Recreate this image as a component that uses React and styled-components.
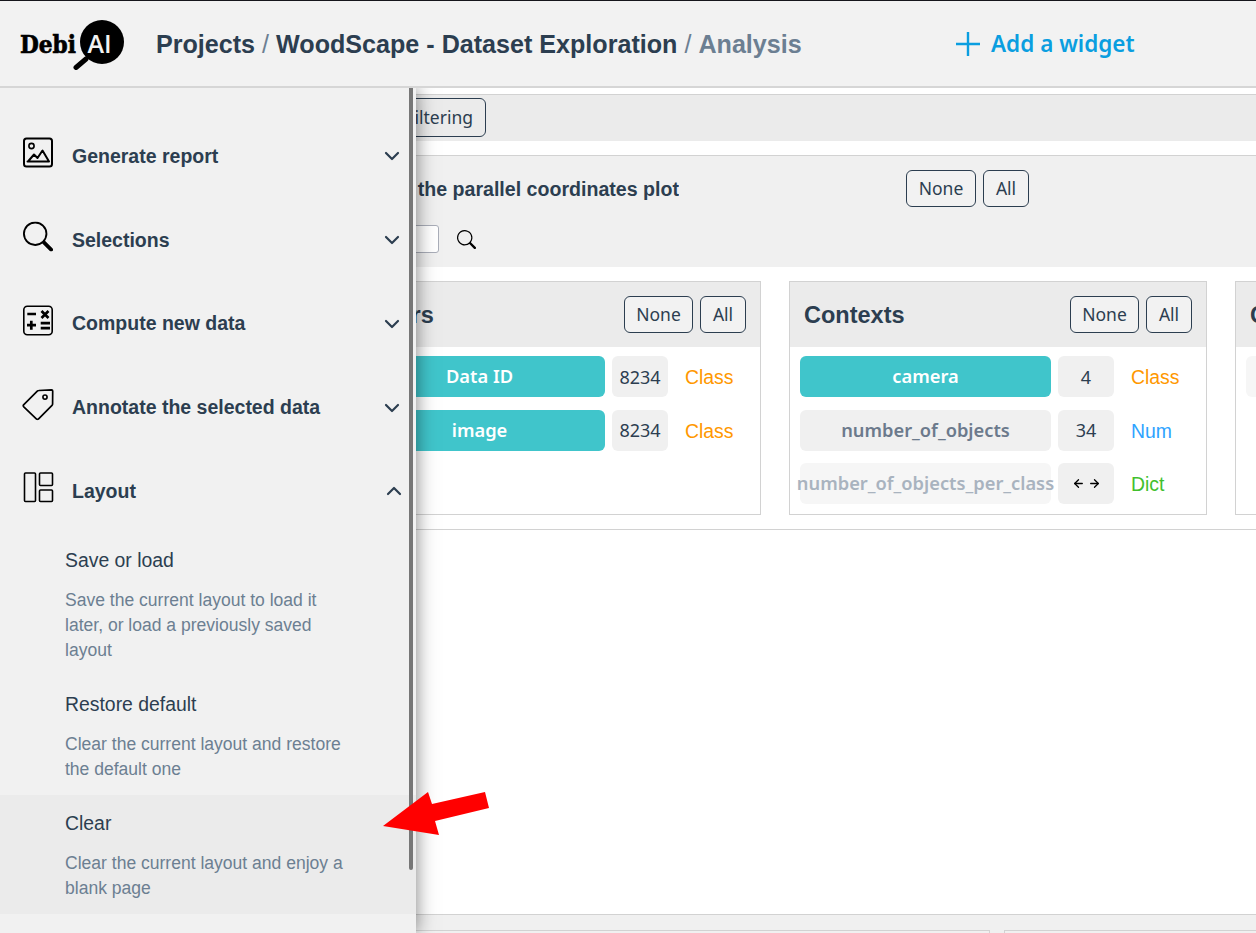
import React from "react";
import styled, { createGlobalStyle } from "styled-components";
import { ChevronDown, ChevronUp, ArrowLeft, ArrowRight } from "lucide-react";
import { BsSearch } from "react-icons/bs";

const GlobalStyle = createGlobalStyle`
  html, body {
    margin: 0;
    padding: 0;
    background: #fff;
    font-family: "Liberation Sans", Arial, sans-serif;
    color: #2c3e50;
  }
`;

const Page = styled.div`
  position: relative;
  width: 1256px;
  height: 933px;
  overflow: hidden;
  display: flex;
  flex-direction: column;
`;

const Header = styled.header`
  height: 85px;
  flex-shrink: 0;
  border-top: 1px solid #16161c;
  border-bottom: 2px solid #d6d6d6;
  background: #f2f2f2;
  display: flex;
  align-items: center;
`;

const Logo = styled.svg`
  width: 106px;
  height: 52px;
  margin-left: 20px;
  flex-shrink: 0;
`;

const Breadcrumb = styled.div`
  margin-left: 30px;
  padding-top: 2px;
  width: 800px;
  flex-shrink: 0;
  font-size: 25.12px;
  font-weight: 700;
  white-space: nowrap;
`;

const Slash = styled.span`
  font-weight: 400;
  color: #6c7f92;
  margin: 0 7px;
`;

const Current = styled.span`
  color: #6c7f92;
`;

const AddWidget = styled.div`
  display: flex;
  align-items: center;
  gap: 11px;
  font-family: "Noto Sans", sans-serif;
  font-size: 22.5px;
  font-weight: 600;
  color: #0a9ee0;
  white-space: nowrap;
`;

const TabBar = styled.div`
  margin-top: 6px;
  height: 47px;
  flex-shrink: 0;
  box-sizing: border-box;
  border-top: 1px solid #d2d2d2;
  background: #ebebeb;
  display: flex;
  align-items: flex-start;
  padding: 3px 0 0 380px;
`;

const Button = styled.button`
  box-sizing: border-box;
  height: 37px;
  padding: 0;
  width: ${(props) => props.$width}px;
  border: 1px solid #2c3e50;
  border-radius: 6px;
  background: #f2f2f2;
  color: #2c3e50;
  font-family: "Noto Sans", sans-serif;
  font-size: 17.5px;
  line-height: 1;
`;

const FilterTab = styled(Button)`
  height: 39px;
  background: #ebebeb;
  text-align: right;
  padding-right: 12px;
`;

const SelectBlock = styled.section`
  margin-top: 14px;
  height: 112px;
  flex-shrink: 0;
  box-sizing: border-box;
  border-top: 1px solid #d2d2d2;
  background: #f0f0f0;
  padding-top: 14px;
`;

const SelectHead = styled.div`
  display: flex;
  align-items: center;
  gap: 7px;
`;

const SelectTitle = styled.h2`
  width: 679px;
  margin: 0 220px 0 0;
  font-size: 19.6px;
  line-height: 37px;
  font-weight: 700;
  white-space: nowrap;
  overflow: hidden;
  display: flex;
  justify-content: flex-end;
  transform: translateY(1px);
`;

const SearchRow = styled.div`
  display: flex;
  align-items: center;
  gap: 18px;
  margin-top: 18px;
`;

const SearchInput = styled.input`
  box-sizing: border-box;
  width: 439px;
  height: 28px;
  flex-shrink: 0;
  border: 1px solid #a9adb8;
  border-radius: 3px;
  background: #fff;
`;

const Columns = styled.div`
  display: flex;
  gap: 28px;
  padding: 14px 0 14px 343px;
  flex-shrink: 0;
  border-bottom: 1px solid #d2d2d2;
`;

const Panel = styled.div`
  box-sizing: border-box;
  width: 418px;
  height: 234px;
  flex-shrink: 0;
  border: 1px solid #d2d2d2;
`;

const PanelHead = styled.div`
  height: 65px;
  background: #ebebeb;
  display: flex;
  align-items: center;
  justify-content: space-between;
  padding: 0 14px;
`;

const PanelTitle = styled.h3`
  margin: 2px 0 0;
  font-size: 23.5px;
  font-weight: 700;
`;

const ButtonGroup = styled.div`
  display: flex;
  gap: 7px;
`;

const Rows = styled.div`
  display: flex;
  flex-direction: column;
  gap: 12.5px;
  padding: 9px 10px;
`;

const Row = styled.div`
  display: flex;
  align-items: center;
  height: 41px;
`;

const Pill = styled.div`
  box-sizing: border-box;
  width: 251px;
  height: 41px;
  flex-shrink: 0;
  padding-bottom: 2px;
  border-radius: 6px;
  display: flex;
  align-items: center;
  justify-content: center;
  white-space: nowrap;
  font-family: "Noto Sans", sans-serif;
  font-size: 18.3px;
  font-weight: 600;
  background: ${(props) =>
    props.$state === "on" ? "#40c5cb" : props.$state === "off" ? "#f0f0f0" : "#f6f6f6"};
  color: ${(props) =>
    props.$state === "on" ? "#fff" : props.$state === "off" ? "#6c7a8c" : "#a9b3bf"};
`;

const Count = styled.div`
  width: 56px;
  height: 41px;
  flex-shrink: 0;
  margin-left: 7px;
  border-radius: 6px;
  background: #f0f0f0;
  display: flex;
  align-items: center;
  justify-content: center;
  gap: 3px;
  font-family: "Noto Sans", sans-serif;
  font-size: 18px;
  color: #2c3e50;
`;

const Type = styled.span`
  margin-left: 17px;
  padding-top: 2px;
  font-size: 19.4px;
  color: ${(props) => props.$color};
`;

const Blank = styled.div`
  flex: 1;
`;

const Footer = styled.div`
  height: 19px;
  flex-shrink: 0;
  box-sizing: border-box;
  border-top: 1px solid #d2d2d2;
  background: #f0f0f0;
  display: flex;
  gap: 14px;
  padding: 15px 0 0 343px;
`;

const FooterCard = styled.div`
  width: ${(props) => props.$width}px;
  flex-shrink: 0;
  box-sizing: border-box;
  border: 1px solid #d2d2d2;
  border-bottom: 0;
  background: #f0f0f0;
`;

const Sidebar = styled.aside`
  position: absolute;
  top: 88px;
  left: 0;
  bottom: 0;
  width: 416px;
  box-sizing: border-box;
  padding-top: 26.6px;
  background: #f1f1f1;
  box-shadow: 0 0 18px rgba(0, 0, 0, 0.5);
  clip-path: inset(0 -30px 0 0);
`;

const Scrollbar = styled.div`
  position: absolute;
  top: 0;
  left: 409px;
  width: 4px;
  height: 782px;
  background: #777;
  border-radius: 0 0 2px 2px;
`;

const MenuRow = styled.div`
  height: 83.7px;
  display: flex;
  align-items: center;
  padding: 0 12px 0 22px;
`;

const MenuIcon = styled.span`
  width: 32px;
  height: 32px;
  display: flex;
  align-items: center;
  justify-content: center;
  color: #000;
  flex-shrink: 0;
  transform: translateY(-3.5px);
`;

const MenuLabel = styled.span`
  margin-left: 18px;
  flex: 1;
  font-size: 19.5px;
  font-weight: 700;
`;

const UpChevron = styled(ChevronUp)`
  margin-right: -2px;
`;

const SubList = styled.div`
  margin-top: -1px;
`;

const SubItem = styled.div`
  padding: 16px 60px 13.5px 65px;
  background: ${(props) => (props.$active ? "#ebebeb" : "transparent")};
`;

const SubTitle = styled.div`
  font-size: 19.4px;
  line-height: 24px;
  margin-bottom: 15.5px;
`;

const SubText = styled.div`
  font-size: 17.55px;
  line-height: 25px;
  color: #6c7f92;
`;

const Arrow = styled.svg`
  position: absolute;
  left: 380px;
  top: 788px;
  width: 112px;
  height: 50px;
`;

const ImageIcon = () => (
  <svg width="32" height="32" viewBox="0 0 32 32" fill="none" stroke="#000" strokeWidth="2">
    <rect x="2" y="2" width="28" height="28" rx="2.5" />
    <circle cx="9.5" cy="9.5" r="2.6" strokeWidth="1.6" />
    <path d="M5.5 25H27M6 25l6-7 3.5 3.5L20.5 14 27 25" strokeLinejoin="round" strokeLinecap="round" />
  </svg>
);

const CalcIcon = () => (
  <svg width="32" height="32" viewBox="0 0 32 32" fill="none" stroke="#000">
    <rect x="1.8" y="1.8" width="28.4" height="28.4" rx="3.5" strokeWidth="1.6" />
    <path
      d="M5.3 9.5H14M9.3 16.2v9M5 20.7h9M19.5 6.5l7 7M26.5 6.5l-7 7M18.7 18.7H28M18.7 23.7H28"
      strokeWidth="2.7"
    />
  </svg>
);

const TagIcon = () => (
  <svg width="32" height="32" viewBox="0 0 32 32" fill="none" stroke="#000" strokeWidth="1.7">
    <path
      d="M1.8 16.2 15.3 2.6c.4-.4.9-.6 1.4-.6L29.5 1.4c.7 0 1.2.5 1.2 1.2l-.1 12.8c0 .5-.2 1-.6 1.4L16.6 30.3c-.7.7-1.6.7-2.3 0L1.8 18.4c-.6-.6-.6-1.6 0-2.2z"
      strokeLinejoin="round"
    />
    <circle cx="23" cy="8.6" r="2.1" strokeWidth="1.6" />
  </svg>
);

const PanesIcon = () => (
  <svg width="32" height="32" viewBox="0 0 32 32" fill="none" stroke="#000" strokeWidth="1.6">
    <rect x="2.5" y="1.5" width="11" height="28.5" rx="1" />
    <rect x="17.5" y="1.5" width="13" height="12.5" rx="1" />
    <rect x="17.5" y="18.5" width="13" height="11.5" rx="1" />
  </svg>
);

const Tool = ({ icon, label, open }) => (
  <MenuRow>
    <MenuIcon>{icon}</MenuIcon>
    <MenuLabel>{label}</MenuLabel>
    {open ? (
      <UpChevron size={24} strokeWidth={2.2} />
    ) : (
      <ChevronDown size={24} strokeWidth={2.2} />
    )}
  </MenuRow>
);

const Layout = ({ title, text, active }) => (
  <SubItem $active={active}>
    <SubTitle>{title}</SubTitle>
    <SubText>{text}</SubText>
  </SubItem>
);

const Swap = () => (
  <>
    <ArrowLeft size={13} strokeWidth={2.4} color="#000" />
    <ArrowRight size={13} strokeWidth={2.4} color="#000" />
  </>
);

const ColumnPanel = ({ title, rows }) => (
  <Panel>
    <PanelHead>
      <PanelTitle>{title}</PanelTitle>
      <ButtonGroup>
        <Button $width={69}>None</Button>
        <Button $width={46}>All</Button>
      </ButtonGroup>
    </PanelHead>
    <Rows>
      {rows.map((row) => (
        <Row key={row.name}>
          <Pill $state={row.state}>{row.name}</Pill>
          <Count>{row.count}</Count>
          <Type $color={row.color}>{row.type}</Type>
        </Row>
      ))}
    </Rows>
  </Panel>
);

const ORANGE = "#ff9800";
const BLUE = "#2ea3ff";
const GREEN = "#41bf2e";

export default function App() {
  return (
    <Page>
      <GlobalStyle />
      <Header>
        <Logo viewBox="0 0 106 52">
          <text
            x="0"
            y="34.5"
            fontFamily="DejaVu Serif"
            fontWeight="700"
            fontSize="25"
            textLength="56"
            lengthAdjust="spacingAndGlyphs"
            fill="#000"
            stroke="#000"
            strokeWidth="0.7"
          >
            Debi
          </text>
          <circle cx="82" cy="24" r="22" fill="#000" />
          <path d="M66 41 56 49.5" stroke="#000" strokeWidth="5" strokeLinecap="round" />
          <text x="67.5" y="34.5" fontFamily="Open Sans" fontWeight="600" fontSize="25" fill="#f2f2f2">
            AI
          </text>
        </Logo>
        <Breadcrumb>
          Projects<Slash>/</Slash>WoodScape - Dataset Exploration<Slash>/</Slash>
          <Current>Analysis</Current>
        </Breadcrumb>
        <AddWidget>
          <svg width="24" height="24" viewBox="0 0 24 24" stroke="#0a9ee0" strokeWidth="2.4">
            <path d="M12 0v24M0 12h24" />
          </svg>
          Add a widget
        </AddWidget>
      </Header>

      <TabBar>
        <FilterTab $width={106}>Filtering</FilterTab>
      </TabBar>

      <SelectBlock>
        <SelectHead>
          <SelectTitle>Select the columns to display on the parallel coordinates plot</SelectTitle>
          <Button $width={70}>None</Button>
          <Button $width={46}>All</Button>
        </SelectHead>
        <SearchRow>
          <SearchInput />
          <BsSearch size={19} color="#000" />
        </SearchRow>
      </SelectBlock>

      <Columns>
        <ColumnPanel
          title="Others"
          rows={[
            { name: "Data ID", count: "8234", type: "Class", color: ORANGE, state: "on" },
            { name: "image", count: "8234", type: "Class", color: ORANGE, state: "on" },
          ]}
        />
        <ColumnPanel
          title="Contexts"
          rows={[
            { name: "camera", count: "4", type: "Class", color: ORANGE, state: "on" },
            { name: "number_of_objects", count: "34", type: "Num", color: BLUE, state: "off" },
            { name: "number_of_objects_per_class", count: <Swap />, type: "Dict", color: GREEN, state: "dim" },
          ]}
        />
        <ColumnPanel
          title="Groundtruth"
          rows={[{ name: "bboxes", count: <Swap />, type: "Dict", color: GREEN, state: "dim" }]}
        />
      </Columns>

      <Blank />

      <Footer>
        <FooterCard $width={647} />
        <FooterCard $width={418} />
      </Footer>

      <Sidebar>
        <Scrollbar />
        <Tool icon={<ImageIcon />} label="Generate report" />
        <Tool icon={<BsSearch size={30} />} label="Selections" />
        <Tool icon={<CalcIcon />} label="Compute new data" />
        <Tool icon={<TagIcon />} label="Annotate the selected data" />
        <Tool icon={<PanesIcon />} label="Layout" open />
        <SubList>
          <Layout
            title="Save or load"
            text="Save the current layout to load it later, or load a previously saved layout"
          />
          <Layout
            title="Restore default"
            text="Clear the current layout and restore the default one"
          />
          <Layout title="Clear" text="Clear the current layout and enjoy a blank page" active />
        </SubList>
      </Sidebar>

      <Arrow viewBox="0 0 112 50">
        <path d="M3 38 48 4 52 16 105 4 109 20 55 33 59 47z" fill="#ff0000" />
      </Arrow>
    </Page>
  );
}
